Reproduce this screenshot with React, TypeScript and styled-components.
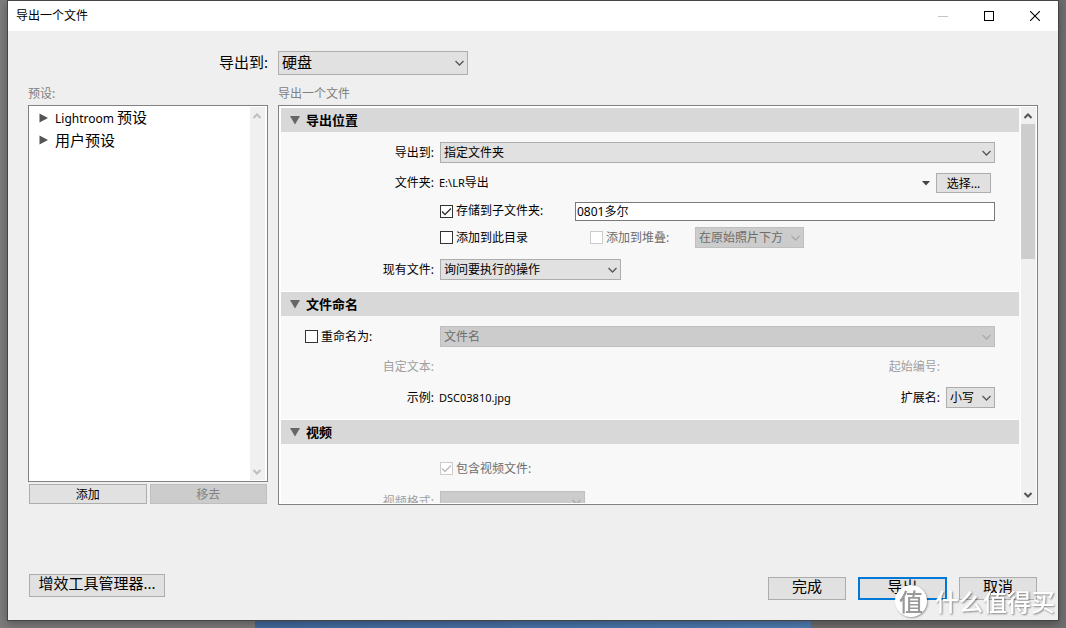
import React from "react";
import styled, { createGlobalStyle, css } from "styled-components";

const Global = createGlobalStyle`
  *, *::before, *::after { box-sizing: border-box; }
  body {
    margin: 0;
    color: #000;
    font-family: "Noto Sans", "Noto Sans CJK SC", sans-serif;
    font-size: 12px;
    line-height: 16px;
  }
  button, input, select { font: inherit; color: inherit; margin: 0; }
`;

const Desktop = styled.div`
  display: flex;
  height: 100vh;
  min-height: 520px;
  padding: 0 7px 7px;
  background: linear-gradient(to right, #7c7c7c 23.9%, #44699c 23.9%, #4f7db3 76.1%, #6e6e6e 76.1%);
`;

const Dialog = styled.main`
  flex: 1;
  min-width: 0;
  display: flex;
  flex-direction: column;
  background: #efefef;
  border: 1px solid #444;
  box-shadow: 0 3px 8px rgba(0, 0, 0, 0.3);
`;

const TitleBar = styled.header`
  display: flex;
  align-items: center;
  justify-content: space-between;
  flex: none;
  height: 30px;
  padding-left: 8px;
  background: #fff;
`;

const Title = styled.h1`
  margin: 0;
  font-size: 12px;
  font-weight: 400;
`;

const WindowButtons = styled.div`
  display: flex;
`;

const WindowButton = styled.button`
  display: grid;
  place-items: center;
  width: 46px;
  height: 29px;
  padding: 0;
  border: 0;
  background: none;
`;

const Content = styled.form`
  flex: 1;
  min-height: 0;
  display: flex;
  flex-direction: column;
  padding: 20px;
`;

const columns = css`
  display: grid;
  grid-template-columns: 240px minmax(0, 1fr);
  column-gap: 10px;
`;

const TargetRow = styled.div`
  ${columns}
  flex: none;
  align-items: center;
`;

const TargetLabel = styled.label`
  height: 24px;
  text-align: right;
  font-size: 15px;
  line-height: 22px;
`;

const Panels = styled.div`
  ${columns}
  flex: 1;
  min-height: 0;
  grid-template-rows: minmax(0, 1fr);
`;

const Column = styled.section`
  display: flex;
  flex-direction: column;
  min-height: 0;
`;

const Caption = styled.h2`
  flex: none;
  margin: 0;
  padding: 11px 0 3px;
  color: #808080;
  font-size: 12px;
  font-weight: 400;
`;

const Frame = styled.div<{ $pad: string }>`
  flex: 1;
  min-height: 0;
  display: flex;
  padding: ${(p) => p.$pad};
  background: #fff;
  border: 1px solid #828282;
`;

const PresetList = styled.ul`
  flex: 1;
  margin: 0;
  padding: 0 0 0 9px;
  list-style: none;
`;

const Preset = styled.li`
  display: flex;
  align-items: center;
  gap: 7px;
  height: 22px;
  font-size: 15px;
`;

const Latin = styled.span<{ $size: number }>`
  font-size: ${(p) => p.$size}px;
`;

const PresetButtons = styled.div`
  display: grid;
  grid-template-columns: 1fr 1fr;
  gap: 3px;
  flex: none;
  padding: 2px 1px 1px;
`;

const Button = styled.button<{ $large?: boolean; $primary?: boolean; $width?: number }>`
  width: ${(p) => (p.$width ? `${p.$width}px` : "auto")};
  height: ${(p) => (p.$large ? 23 : 20)}px;
  padding: ${(p) => (p.$large ? "0 0 4px" : "1px 0 0")};
  border: ${(p) => (p.$primary ? "2px solid #0078d7" : "1px solid #adadad")};
  border-radius: 0;
  background: #e1e1e1;
  font-size: ${(p) => (p.$large ? 15 : 12)}px;
  line-height: ${(p) => (p.$large ? 15 : 17)}px;
  &:disabled {
    background: #ccc;
    border-color: #bfbfbf;
    color: #838383;
  }
`;

const Bar = styled.div`
  display: flex;
  flex-direction: column;
  align-items: flex-start;
  flex: none;
  width: 15px;
  background: #f0f0f0;
`;

const BarArrow = styled.button`
  display: grid;
  place-items: center;
  width: 14px;
  height: 17px;
  padding: 0;
  border: 0;
  background: none;
`;

const Thumb = styled.div`
  width: 14px;
  height: 34%;
  background: #cdcdcd;
`;

const Spacer = styled.div`
  flex: 1;
`;

const Settings = styled.div`
  flex: 1;
  min-width: 0;
  overflow-y: auto;
  scrollbar-width: none;
  padding-right: 1px;
  margin-right: 1px;
  background: #f8f8f8;
`;

const SectionTitle = styled.h3`
  display: flex;
  align-items: center;
  gap: 6px;
  height: 25px;
  margin: 0;
  padding-left: 9px;
  border-top: 1px solid #fff;
  background: #d8d8d8;
  font-size: 13px;
  font-weight: 700;
`;

const SectionBody = styled.div<{ $bottom: number }>`
  padding: 5px 24px ${(p) => p.$bottom}px 0;
`;

const Row = styled.div<{ $height: number }>`
  display: grid;
  grid-template-columns: 153px minmax(0, 1fr);
  column-gap: 6px;
  align-items: center;
  height: ${(p) => p.$height}px;
`;

const Label = styled.label<{ $dim?: boolean }>`
  text-align: right;
  color: ${(p) => (p.$dim ? "#a0a0a0" : "inherit")};
`;

const Field = styled.div`
  display: flex;
  align-items: center;
  min-width: 0;
`;

const RenameCell = styled.div`
  padding-left: 24px;
`;

const CheckLabel = styled.label<{ $width?: number; $dim?: boolean }>`
  display: flex;
  align-items: center;
  gap: 3px;
  flex: none;
  width: ${(p) => (p.$width ? `${p.$width}px` : "auto")};
  color: ${(p) => (p.$dim ? "#6d6d6d" : "inherit")};
`;

const CheckBox = styled.input`
  appearance: none;
  flex: none;
  width: 13px;
  height: 13px;
  border: 1px solid #333;
  background: #fff;
  &:checked {
    background: #fff
      url("data:image/svg+xml,%3Csvg xmlns='http://www.w3.org/2000/svg' viewBox='0 0 11 11'%3E%3Cpath d='M1 5.5 4 8.5 10 2.5' fill='none' stroke='%23333' stroke-width='1.3'/%3E%3C/svg%3E");
  }
  &:disabled { border-color: #ccc; }
  &:disabled:checked {
    background: #fff
      url("data:image/svg+xml,%3Csvg xmlns='http://www.w3.org/2000/svg' viewBox='0 0 11 11'%3E%3Cpath d='M1 5.5 4 8.5 10 2.5' fill='none' stroke='%23bbb' stroke-width='1.3'/%3E%3C/svg%3E");
  }
`;

const TextInput = styled.input`
  flex: 1;
  min-width: 0;
  height: 19px;
  padding: 0 1px;
  border: 1px solid #7a7a7a;
  border-radius: 0;
  background: #fff;
  font-size: 12px;
`;

const SelectWrap = styled.span<{ $width?: number; $large?: boolean }>`
  position: relative;
  display: flex;
  width: ${(p) => (p.$width ? `${p.$width}px` : "100%")};
  height: ${(p) => (p.$large ? 24 : 21)}px;
  font-size: ${(p) => (p.$large ? 15 : 12)}px;
  svg {
    position: absolute;
    right: 4px;
    top: 50%;
    margin-top: -3px;
    pointer-events: none;
  }
`;

const NativeSelect = styled.select<{ $large?: boolean }>`
  appearance: none;
  width: 100%;
  height: 100%;
  padding: ${(p) => (p.$large ? "0 16px 2px 3px" : "1px 16px 0 3px")};
  border: 1px solid #adadad;
  border-radius: 0;
  background: #e1e1e1;
  &:disabled {
    background: #ccc;
    border-color: #bfbfbf;
    color: #6d6d6d;
    opacity: 1;
  }
`;

const FolderPath = styled.output`
  flex: 1;
  margin-left: -1px;
`;

const HistoryButton = styled.button`
  display: grid;
  width: 20px;
  height: 20px;
  place-items: center;
  padding: 0;
  border: 0;
  background: none;
`;

const ButtonSlot = styled.div`
  display: flex;
  padding-right: 4px;
`;

const Gap = styled.span<{ $width: number }>`
  flex: none;
  width: ${(p) => p.$width}px;
`;

const Footer = styled.footer`
  display: flex;
  justify-content: space-between;
  flex: none;
  padding: 69px 1px 0;
`;

const Actions = styled.div`
  display: flex;
  gap: 12px;
  padding-top: 3px;
`;

const Watermark = styled.div`
  position: fixed;
  right: 11px;
  bottom: 11px;
  display: flex;
  align-items: center;
  gap: 8px;
  height: 32px;
  color: #fff;
  font-family: "Noto Sans CJK SC", sans-serif;
  font-size: 24px;
  font-weight: 500;
  line-height: 32px;
  text-shadow: 1px 1px 2px rgba(0, 0, 0, 0.45);
  pointer-events: none;
`;

const Seal = styled.span`
  width: 32px;
  height: 32px;
  border-radius: 50%;
  background: #fff;
  color: #999;
  line-height: 31px;
  text-align: center;
  text-shadow: none;
  box-shadow: 1px 1px 2px rgba(0, 0, 0, 0.35);
`;

const Chevron = ({ color = "#555" }: { color?: string }) => (
  <svg width="9" height="6" viewBox="0 0 9 6" aria-hidden="true">
    <path d="M.5 1 4.5 5 8.5 1" fill="none" stroke={color} strokeWidth="1.3" />
  </svg>
);

const BarChevron = ({ color, up = false }: { color: string; up?: boolean }) => (
  <svg width="8" height="6" viewBox="0 0 8 6" aria-hidden="true">
    <path d={up ? "M.5 5 4 1.5 7.5 5" : "M.5 1 4 4.5 7.5 1"} fill="none" stroke={color} strokeWidth="2" />
  </svg>
);

const Closed = () => (
  <svg width="9" height="10" viewBox="0 0 9 10" aria-hidden="true">
    <path d="M.5 .5 9 5 .5 9.5Z" fill="#555" />
  </svg>
);

const Open = () => (
  <svg width="10" height="10" viewBox="0 0 10 10" aria-hidden="true">
    <path d="M0 1H10L5 9.5Z" fill="#666" />
  </svg>
);

type DropDownProps = {
  id?: string;
  name?: string;
  value: string;
  width?: number;
  large?: boolean;
  disabled?: boolean;
};

const DropDown = ({ id, name, value, width, large, disabled }: DropDownProps) => (
  <SelectWrap $width={width} $large={large}>
    <NativeSelect id={id} aria-label={name} disabled={disabled} $large={large}>
      <option>{value}</option>
    </NativeSelect>
    <Chevron color={disabled ? "#aaa" : "#555"} />
  </SelectWrap>
);

const ScrollBar = ({ active }: { active?: boolean }) => (
  <Bar>
    <BarArrow type="button" aria-label="向上滚动">
      <BarChevron up color={active ? "#555" : "#bfbfbf"} />
    </BarArrow>
    {active && <Thumb />}
    <Spacer />
    <BarArrow type="button" aria-label="向下滚动">
      <BarChevron color={active ? "#555" : "#bfbfbf"} />
    </BarArrow>
  </Bar>
);

export default function App() {
  return (
    <>
      <Global />
      <Desktop>
        <Dialog>
          <TitleBar>
            <Title>导出一个文件</Title>
            <WindowButtons>
              <WindowButton type="button" aria-label="最小化" disabled>
                <svg width="10" height="11"><path d="M0 5.5H10" stroke="#c4c4c4" /></svg>
              </WindowButton>
              <WindowButton type="button" aria-label="最大化">
                <svg width="10" height="10"><rect x=".5" y=".5" width="9" height="9" fill="none" stroke="#000" /></svg>
              </WindowButton>
              <WindowButton type="button" aria-label="关闭">
                <svg width="10" height="10"><path d="M0 0 10 10M10 0 0 10" stroke="#000" strokeWidth="1.1" /></svg>
              </WindowButton>
            </WindowButtons>
          </TitleBar>
          <Content onSubmit={(e) => e.preventDefault()}>
            <TargetRow>
              <TargetLabel htmlFor="target">导出到:</TargetLabel>
              <DropDown id="target" value="硬盘" width={190} large />
            </TargetRow>
            <Panels>
              <Column>
                <Caption>预设:</Caption>
                <Frame $pad="1px 2px 1px 1px">
                  <PresetList>
                    <Preset><Closed /><span><Latin $size={12}>Lightroom </Latin>预设</span></Preset>
                    <Preset><Closed />用户预设</Preset>
                  </PresetList>
                  <ScrollBar />
                </Frame>
                <PresetButtons>
                  <Button type="button">添加</Button>
                  <Button type="button" disabled>移去</Button>
                </PresetButtons>
              </Column>
              <Column>
                <Caption>导出一个文件</Caption>
                <Frame $pad="1px 1px 1px 2px">
                  <Settings>
                    <SectionTitle><Open />导出位置</SectionTitle>
                    <SectionBody $bottom={3}>
                      <Row $height={31}>
                        <Label htmlFor="place">导出到:</Label>
                        <DropDown id="place" value="指定文件夹" />
                      </Row>
                      <Row $height={30}>
                        <Label htmlFor="folder">文件夹:</Label>
                        <Field>
                          <FolderPath id="folder"><Latin $size={11}>E:\LR</Latin>导出</FolderPath>
                          <HistoryButton type="button" aria-label="最近的文件夹">
                            <svg width="8" height="5"><path d="M0 0H8L4 4.5Z" fill="#444" /></svg>
                          </HistoryButton>
                          <ButtonSlot><Button type="button" $width={55}>选择...</Button></ButtonSlot>
                        </Field>
                      </Row>
                      <Row $height={26}>
                        <span />
                        <Field>
                          <CheckLabel $width={135}>
                            <CheckBox type="checkbox" defaultChecked />存储到子文件夹:
                          </CheckLabel>
                          <TextInput type="text" aria-label="子文件夹" defaultValue="0801多尔" />
                        </Field>
                      </Row>
                      <Row $height={27}>
                        <span />
                        <Field>
                          <CheckLabel $width={150}><CheckBox type="checkbox" />添加到此目录</CheckLabel>
                          <CheckLabel $width={105} $dim><CheckBox type="checkbox" disabled />添加到堆叠:</CheckLabel>
                          <DropDown name="堆叠位置" value="在原始照片下方" width={109} disabled />
                        </Field>
                      </Row>
                      <Row $height={37}>
                        <Label htmlFor="existing">现有文件:</Label>
                        <DropDown id="existing" value="询问要执行的操作" width={181} />
                      </Row>
                    </SectionBody>
                    <SectionTitle><Open />文件命名</SectionTitle>
                    <SectionBody $bottom={6}>
                      <Row $height={31}>
                        <RenameCell>
                          <CheckLabel><CheckBox type="checkbox" />重命名为:</CheckLabel>
                        </RenameCell>
                        <DropDown name="文件名模板" value="文件名" disabled />
                      </Row>
                      <Row $height={30}>
                        <Label as="span" $dim>自定文本:</Label>
                        <Field>
                          <Spacer />
                          <Label as="span" $dim>起始编号:</Label>
                          <Gap $width={55} />
                        </Field>
                      </Row>
                      <Row $height={31}>
                        <Label htmlFor="example">示例:</Label>
                        <Field>
                          <FolderPath id="example"><Latin $size={11}>DSC03810.jpg</Latin></FolderPath>
                          <Label htmlFor="extension">扩展名:</Label>
                          <Gap $width={6} />
                          <DropDown id="extension" value="小写" width={49} />
                        </Field>
                      </Row>
                    </SectionBody>
                    <SectionTitle><Open />视频</SectionTitle>
                    <SectionBody $bottom={6}>
                      <Row $height={39}>
                        <span />
                        <CheckLabel $dim><CheckBox type="checkbox" defaultChecked disabled />包含视频文件:</CheckLabel>
                      </Row>
                      <Row $height={27}>
                        <Label htmlFor="format" $dim>视频格式:</Label>
                        <DropDown id="format" value="" width={145} disabled />
                      </Row>
                    </SectionBody>
                  </Settings>
                  <ScrollBar active />
                </Frame>
              </Column>
            </Panels>
            <Footer>
              <Button type="button" $large $width={136}>增效工具管理器...</Button>
              <Actions>
                <Button type="button" $large $width={78}>完成</Button>
                <Button type="submit" $large $primary $width={89}>导出</Button>
                <Button type="button" $large $width={78}>取消</Button>
              </Actions>
            </Footer>
          </Content>
        </Dialog>
      </Desktop>
      <Watermark><Seal>值</Seal>什么值得买</Watermark>
    </>
  );
}
